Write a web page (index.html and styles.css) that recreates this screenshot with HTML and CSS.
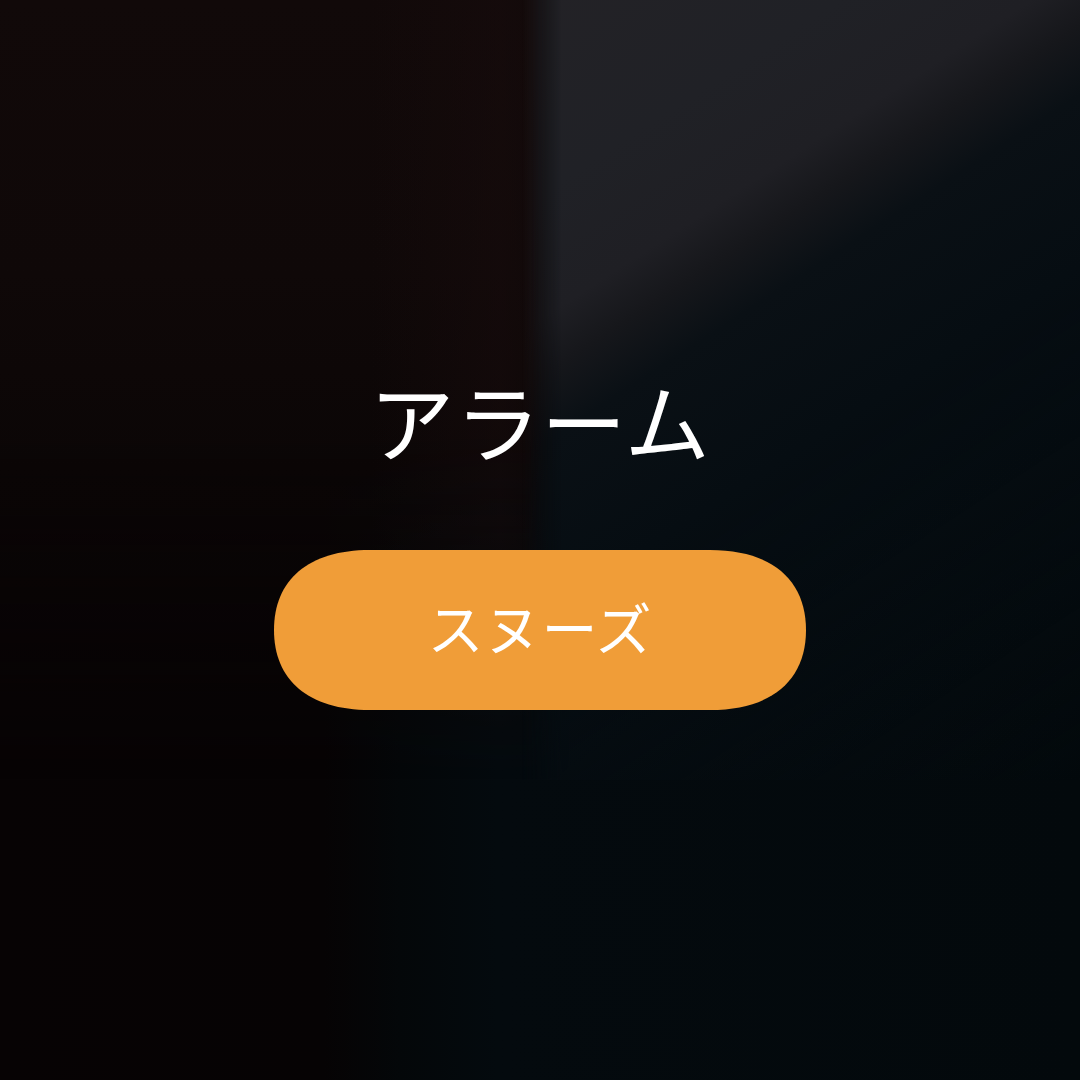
FILE: index.html
```html
<!DOCTYPE html>
<html lang="ja">
<head>
<meta charset="utf-8">
<link rel="stylesheet" href="styles.css">
</head>
<body>
<main class="screen">
  <div class="warm"></div>
  <div class="rays"></div>
  <h1 class="title">アラーム</h1>
  <button class="snooze">スヌーズ</button>
</main>
</body>
</html>
```
FILE: styles.css
```css
html, body {
  margin: 0;
  padding: 0;
  width: 1080px;
  height: 1080px;
  overflow: hidden;
}
.screen {
  position: relative;
  width: 1080px;
  height: 1080px;
  display: flex;
  flex-direction: column;
  align-items: center;
  font-family: "Noto Sans CJK JP", "Noto Sans", sans-serif;
  background: linear-gradient(90deg, #070304 0%, #060304 30%, #040709 37%, #040a0e 46%, #03090c 100%);
  overflow: hidden;
}
.warm {
  position: absolute;
  left: 0;
  top: 0;
  width: 570px;
  height: 780px;
  background:
    linear-gradient(90deg, rgba(0,0,0,0) 0%, rgba(0,0,0,0) 65%, rgba(24,12,13,0.5) 88%, rgba(24,12,13,0) 100%),
    linear-gradient(180deg, #110909 0%, #0f0808 35%, #0b0606 60%, #080405 100%);
  -webkit-mask-image: linear-gradient(90deg, #000 calc(100% - 40px), transparent 100%), linear-gradient(180deg, #000 55%, transparent 100%);
  -webkit-mask-composite: source-in;
  mask-image: linear-gradient(90deg, #000 calc(100% - 40px), transparent 100%), linear-gradient(180deg, #000 55%, transparent 100%);
  mask-composite: intersect;
}
.rays {
  position: absolute;
  left: 522px;
  top: 0;
  width: 558px;
  height: 780px;
  background: linear-gradient(147deg, #232226 0%, #202126 18%, #1f1f24 29%, #16171b 34%, #0a1015 40%, #060d12 55%, rgba(5,12,16,0) 100%);
  -webkit-mask-image: linear-gradient(90deg, transparent 0, #000 40px);
  mask-image: linear-gradient(90deg, transparent 0, #000 40px);
}
.title {
  position: relative;
  margin: 364px 0 0;
  font-size: 85px;
  font-weight: 400;
  line-height: 110px;
  color: #ffffff;
  letter-spacing: 1px;
}
.snooze {
  position: relative;
  margin-top: 76px;
  width: 532px;
  height: 160px;
  border: none;
  border-radius: 0;
  clip-path: path('M96 0 H436 C498 0 532 30 532 80 C532 130 498 160 436 160 H96 C34 160 0 130 0 80 C0 30 34 0 96 0 Z');
  background: #f09d38;
  color: #ffffff;
  font-family: "Noto Sans CJK JP", "Noto Sans", sans-serif;
  font-size: 56px;
  font-weight: 400;
  letter-spacing: 1px;
  padding: 0 0 10px;
}
```
